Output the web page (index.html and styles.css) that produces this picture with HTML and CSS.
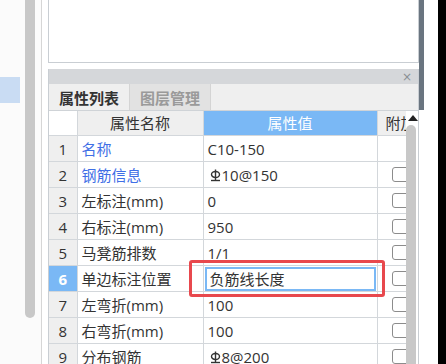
FILE: index.html
```html
<!DOCTYPE html>
<html lang="zh-CN">

<head>
    <meta charset="UTF-8">
    <title>属性列表</title>
    <link rel="stylesheet" href="styles.css">
</head>

<body>
    <div class="screen">
        <div class="side">
            <div class="side-hl"></div>
        </div>
        <div class="side-scroll">
            <div class="side-thumb"></div>
        </div>
        <div class="frame">
            <div class="main">
                <div class="top-box"></div>
                <div class="panel">
                    <div class="panel-head"><span class="close">×</span></div>
                    <div class="tabs">
                        <div class="tab active">属性列表</div>
                        <div class="tab">图层管理</div>
                    </div>
                    <div class="grid-wrap">
                        <table class="props">
                            <colgroup>
                                <col class="c-num">
                                <col class="c-name">
                                <col class="c-val">
                                <col class="c-add">
                            </colgroup>
                            <thead>
                                <tr>
                                    <th class="h-num"></th>
                                    <th class="h-name">属性名称</th>
                                    <th class="h-val">属性值</th>
                                    <th class="h-add">附加</th>
                                </tr>
                            </thead>
                            <tbody>
                                <tr>
                                    <td class="num">1</td>
                                    <td class="name link">名称</td>
                                    <td class="val">C10-150</td>
                                    <td class="add"></td>
                                </tr>
                                <tr>
                                    <td class="num">2</td>
                                    <td class="name link">钢筋信息</td>
                                    <td class="val"><span class="bar-sym"><svg width="11" height="13" viewBox="0 0 11 13"><ellipse cx="5.5" cy="5.5" rx="4" ry="3" fill="none" stroke="#333" stroke-width="1.4"/><line x1="5.5" y1="0.5" x2="5.5" y2="11" stroke="#333" stroke-width="1.4"/><line x1="1" y1="11.5" x2="10" y2="11.5" stroke="#333" stroke-width="1.4"/></svg></span>10@150</td>
                                    <td class="add"><span class="chk"></span></td>
                                </tr>
                                <tr>
                                    <td class="num">3</td>
                                    <td class="name">左标注(mm)</td>
                                    <td class="val">0</td>
                                    <td class="add"><span class="chk"></span></td>
                                </tr>
                                <tr>
                                    <td class="num">4</td>
                                    <td class="name">右标注(mm)</td>
                                    <td class="val">950</td>
                                    <td class="add"><span class="chk"></span></td>
                                </tr>
                                <tr>
                                    <td class="num">5</td>
                                    <td class="name">马凳筋排数</td>
                                    <td class="val">1/1</td>
                                    <td class="add"><span class="chk"></span></td>
                                </tr>
                                <tr class="current">
                                    <td class="num">6</td>
                                    <td class="name">单边标注位置</td>
                                    <td class="val editing">
                                        <div class="edit-box">负筋线长度</div>
                                        <div class="mark"></div>
                                    </td>
                                    <td class="add"><span class="chk"></span></td>
                                </tr>
                                <tr>
                                    <td class="num">7</td>
                                    <td class="name">左弯折(mm)</td>
                                    <td class="val">100</td>
                                    <td class="add"><span class="chk"></span></td>
                                </tr>
                                <tr>
                                    <td class="num">8</td>
                                    <td class="name">右弯折(mm)</td>
                                    <td class="val">100</td>
                                    <td class="add"><span class="chk"></span></td>
                                </tr>
                                <tr>
                                    <td class="num">9</td>
                                    <td class="name">分布钢筋</td>
                                    <td class="val"><span class="bar-sym"><svg width="11" height="13" viewBox="0 0 11 13"><ellipse cx="5.5" cy="5.5" rx="4" ry="3" fill="none" stroke="#333" stroke-width="1.4"/><line x1="5.5" y1="0.5" x2="5.5" y2="11" stroke="#333" stroke-width="1.4"/><line x1="1" y1="11.5" x2="10" y2="11.5" stroke="#333" stroke-width="1.4"/></svg></span>8@200</td>
                                    <td class="add"><span class="chk"></span></td>
                                </tr>
                            </tbody>
                        </table>
                        <div class="vscroll">
                            <div class="arrow-up"></div>
                            <div class="thumb"></div>
                        </div>
                    </div>
                </div>
            </div>
            <div class="edge"></div>
        </div>
        <div class="outside"></div>
    </div>
</body>

</html>
```

FILE: styles.css
```css
:root {
    --line-color: #d3d7db;
    --cell-gray: #efefef;
    --head-blue: #7ab8f5;
    --text-color: #333333;
    --link-color: #3f6fe6;
}

body {
    margin: 0;
    padding: 0;
    font-family: "Open Sans", "Noto Sans CJK SC", sans-serif;
    font-size: 15px;
    color: var(--text-color);
    background-color: #fbfbfb;
    overflow: hidden;
}

.screen {
    display: flex;
    width: 446px;
    height: 364px;
    overflow: hidden;
}

.side {
    width: 25px;
    flex: none;
    padding-top: 77px;
}

.side-hl {
    width: 20px;
    height: 26px;
    background-color: #c9dcf3;
}

.side-scroll {
    width: 10px;
    flex: none;
}

.side-thumb {
    height: 318px;
    background-color: #c8c8c8;
    border-radius: 0 0 5px 5px;
}

.frame {
    display: flex;
    flex: none;
    width: 390px;
    padding-left: 6px;
    border-left: 1px solid #d6d6d6;
    margin-left: 6px;
    background-color: #ffffff;
}

.main {
    width: 371px;
    flex: none;
}

.top-box {
    height: 63px;
    background-color: #ffffff;
    border: 1px solid #c9ced3;
    border-top: none;
    box-sizing: border-box;
}

.panel {
    margin-top: 6px;
    border-left: 1px solid #c9ced3;
    border-right: 1px solid #c9ced3;
}

.panel-head {
    height: 15px;
    background-color: #d5d7da;
    display: flex;
    justify-content: flex-end;
    align-items: center;
    padding-right: 6px;
}

.close {
    font-family: "DejaVu Sans", sans-serif;
    font-size: 12px;
    line-height: 12px;
    color: #8a8f94;
}

.tabs {
    display: flex;
    height: 26px;
    background-color: #efefef;
    border-bottom: 1px solid #cfd3d7;
}

.tab {
    width: 80px;
    display: flex;
    align-items: center;
    justify-content: center;
    font-size: 15px;
    color: #9a9a9a;
    font-weight: bold;
    background-color: #e2e2e2;
    border-right: 1px solid #d4d4d4;
}

.tab.active {
    color: #333333;
    background-color: #efefef;
}

.grid-wrap {
    display: flex;
    align-items: flex-start;
    background-color: #ffffff;
}

.props {
    border-collapse: collapse;
    table-layout: fixed;
    width: 357px;
    flex: none;
}

.c-num {
    width: 28px;
}

.c-name {
    width: 126px;
}

.c-val {
    width: 174px;
}

.c-add {
    width: 29px;
}

.props th {
    height: 24px;
    padding: 0;
    font-weight: normal;
    font-size: 15px;
    line-height: 16px;
    border-bottom: 1px solid var(--line-color);
    border-right: 1px solid var(--line-color);
    white-space: nowrap;
    overflow: hidden;
}

.h-num {
    background-color: #ffffff;
}

.h-name {
    background-color: var(--cell-gray);
}

.h-val {
    background-color: var(--head-blue);
    color: #ffffff;
}

.props th.h-add {
    background-color: var(--cell-gray);
    text-align: left;
    padding-left: 8px;
    border-right: none;
}

.props tbody tr {
    height: 26px;
}

.props td {
    padding: 0 0 0 4px;
    line-height: 16px;
    border-bottom: 1px solid var(--line-color);
    border-right: 1px solid var(--line-color);
    white-space: nowrap;
    overflow: hidden;
}

.props td.num {
    padding: 0;
    text-align: center;
    background-color: var(--cell-gray);
}

.props td.add {
    border-right: none;
    padding-left: 14px;
    overflow: hidden;
}

.name.link {
    color: var(--link-color);
}

.bar-sym {
    display: inline-block;
    margin: 0 1px 0 2px;
    vertical-align: -1px;
    line-height: 0;
}

.chk {
    display: block;
    width: 17px;
    height: 15px;
    border: 1px solid #8c8c8c;
    border-radius: 3px;
    box-sizing: border-box;
}

.current td.num {
    background-color: var(--head-blue);
    color: #ffffff;
    font-weight: bold;
}

.props td.editing {
    position: relative;
    padding: 0;
    overflow: visible;
}

.edit-box {
    height: 24px;
    margin: 0 1px;
    border: 2px solid #7ab8f5;
    box-sizing: border-box;
    padding-left: 3px;
    line-height: 20px;
}

.mark {
    position: absolute;
    left: -15px;
    top: -6px;
    width: 196px;
    height: 37px;
    border: 3px solid #e8484d;
    border-radius: 3px;
    box-sizing: border-box;
}

.vscroll {
    width: 14px;
    flex: none;
    display: flex;
    flex-direction: column;
    align-items: center;
    padding-top: 4px;
}

.arrow-up {
    width: 0;
    height: 0;
    border-left: 5px solid transparent;
    border-right: 5px solid transparent;
    border-bottom: 6px solid #222222;
}

.thumb {
    width: 10px;
    height: 260px;
    margin-top: 4px;
    margin-left: -4px;
    background-color: #c8c8c8;
    border-radius: 5px 5px 0 0;
}

.edge {
    width: 5px;
    flex: none;
    background: linear-gradient(#6a7580 0, #6a7580 110px, #ffffff 110px);
}

.outside {
    flex: 1;
    background-color: #000000;
}
```
